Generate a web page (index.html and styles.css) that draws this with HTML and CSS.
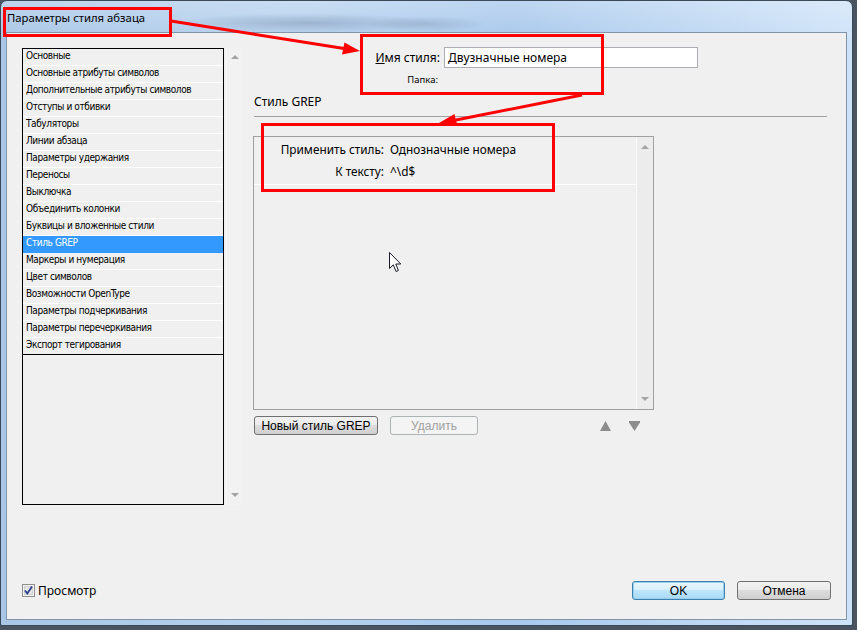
FILE: index.html
```html
<!DOCTYPE html>
<html lang="ru">
<head>
    <meta charset="UTF-8">
    <title>Параметры стиля абзаца</title>
    <link rel="stylesheet" href="styles.css">
</head>
<body>
<div class="screen">
    <div class="window">
        <div class="titlebar"><span class="title">Параметры стиля абзаца</span></div>
        <div class="client">
            <div class="main">
                <!-- left: category list -->
                <div class="side">
                    <ul class="list">
                        <li>Основные</li>
                        <li>Основные атрибуты символов</li>
                        <li>Дополнительные атрибуты символов</li>
                        <li>Отступы и отбивки</li>
                        <li>Табуляторы</li>
                        <li>Линии абзаца</li>
                        <li>Параметры удержания</li>
                        <li>Переносы</li>
                        <li>Выключка</li>
                        <li>Объединить колонки</li>
                        <li>Буквицы и вложенные стили</li>
                        <li class="selected">Стиль GREP</li>
                        <li>Маркеры и нумерация</li>
                        <li>Цвет символов</li>
                        <li>Возможности OpenType</li>
                        <li>Параметры подчеркивания</li>
                        <li>Параметры перечеркивания</li>
                        <li class="last">Экспорт тегирования</li>
                    </ul>
                    <div class="vscroll">
                        <span class="arr up"></span>
                        <span class="arr down"></span>
                    </div>
                </div>

                <!-- right: GREP panel -->
                <div class="panel">
                    <div class="name-grid">
                        <span class="name-label"><u>И</u>мя стиля:</span>
                        <div class="input">Двузначные номера</div>
                        <span class="folder-label">Папка:</span>
                    </div>
                    <h2 class="section-title">Стиль GREP</h2>
                    <div class="rule"></div>
                    <div class="grep-box">
                        <div class="grep-rows">
                            <div class="grep-item">
                                <div class="grep-row"><span class="k">Применить стиль:</span><span class="v">Однозначные номера</span></div>
                                <div class="grep-row"><span class="k">К тексту:</span><span class="v">^\d$</span></div>
                            </div>
                        </div>
                        <div class="vscroll boxed">
                            <span class="arr up"></span>
                            <span class="arr down"></span>
                        </div>
                    </div>
                    <div class="grep-actions">
                        <button class="btn btn-new">Новый стиль GREP</button>
                        <button class="btn btn-del" disabled>Удалить</button>
                        <svg class="move move-up" width="11" height="10" viewBox="0 0 11 10"><polygon points="5.5,0 11,10 0,10" fill="#8c8c8c"/></svg>
                        <svg class="move" width="11" height="10" viewBox="0 0 11 10"><polygon points="0,0 11,0 11,1.5 5.5,10 0,1.5" fill="#8c8c8c"/></svg>
                    </div>
                </div>
            </div>

            <div class="footer">
                <label class="check">
                    <svg width="13" height="13" viewBox="0 0 13 13">
                        <rect x="0.5" y="0.5" width="12" height="12" fill="#f4f4f4" stroke="#8f8f8f"/>
                        <rect x="2.5" y="2.5" width="8" height="8" fill="#e6e6e6" stroke="#d0d0d0"/>
                        <path d="M3 6.5 L5.3 9.5 L10 2.5" fill="none" stroke="#2b3f8c" stroke-width="1.8"/>
                    </svg>
                    <span>Просмотр</span>
                </label>
                <div class="dlg-buttons">
                    <button class="btn btn-dlg btn-default">OK</button>
                    <button class="btn btn-dlg">Отмена</button>
                </div>
            </div>
        </div>
    </div>

    <!-- red annotation marks over the screenshot -->
    <svg class="annotations" width="857" height="630" viewBox="0 0 857 630">
        <g fill="none" stroke="#ff0000" stroke-width="3">
            <rect x="4.5" y="8.5" width="166" height="27"/>
            <rect x="361.5" y="35.5" width="241" height="58"/>
            <rect x="262.5" y="124.5" width="291" height="66"/>
            <line x1="171" y1="21" x2="344" y2="48.5"/>
            <line x1="582" y1="95" x2="456" y2="120"/>
        </g>
        <g fill="#ff0000">
            <polygon points="360,51 342,54.5 344.5,42.5"/>
            <polygon points="439,123 454.5,114 457.5,126"/>
        </g>
    </svg>

    <svg class="cursor" width="13" height="21" viewBox="0 0 13 21">
        <path d="M0.5 0.5 L0.5 16.5 L4.3 12.8 L7 19.5 L9.4 18.5 L6.8 12 L11.8 12 Z" fill="#fff" stroke="#1a1a2a" stroke-width="1"/>
    </svg>
</div>
</body>
</html>
```

FILE: styles.css
```css
body { margin: 0; background: #4a5461; }
.screen { position: relative; width: 857px; height: 630px; overflow: hidden; background: #4a5461; }

/* window frame */
.window { width: 853px; height: 626px; box-sizing: border-box; border: 1px solid #3a4958; border-radius: 7px 7px 2px 2px; padding: 0 5px 5px; display: flex; flex-direction: column;
    background: linear-gradient(to bottom, rgba(255,255,255,0.25), rgba(255,255,255,0) 40px), linear-gradient(to right, #a9c6e6, #b7d2ef 35%, #a8c8ec 60%, #cfe3f8); }
.titlebar { height: 31px; display: flex; align-items: center; padding-left: 1px;
    background: radial-gradient(ellipse 130px 10px at 300px 22px, rgba(70,90,120,0.28), rgba(70,90,120,0)), radial-gradient(ellipse 60px 8px at 420px 23px, rgba(70,90,120,0.2), rgba(70,90,120,0)); }
.title { font: 11.3px "Noto Sans", sans-serif; color: #000; margin-top: 1px; }

.client { flex: 1; display: flex; flex-direction: column; border: 1px solid #8196ad; background: #f0f0f0; }
.main { display: flex; gap: 12px; padding: 15px 19px 0 15px; }

/* category list */
.side { display: flex; width: 220px; height: 457px; flex: none; }
.list { width: 202px; box-sizing: border-box; margin: 0; padding: 0; list-style: none; border: 1px solid #000; background: #f0f0f0; }
.list li { height: 15px; padding: 1px 0 0 3px; line-height: 17px; border-bottom: 1px solid #fff; font: 10px "DejaVu Sans Condensed", "Liberation Sans", sans-serif; letter-spacing: -0.4px; color: #000; white-space: nowrap; }
.list li.selected { background: #3399ff; color: #fff; border-bottom-color: #3399ff; }
.list li.last { border-bottom-color: #000; }

.vscroll { width: 16px; margin-left: 2px; box-sizing: border-box; padding: 7px 0 8px; display: flex; flex-direction: column; justify-content: space-between; align-items: center; background: #f2f2f2; border-left: 1px solid #f7f7f7; }
.vscroll.boxed { width: 17px; margin-left: 0; padding: 8px 0 8px; border-left: 1px solid #fafafa; background: #ececec; }
.arr { width: 0; height: 0; border-left: 4px solid transparent; border-right: 4px solid transparent; }
.arr.up { border-bottom: 4px solid #a4a4a4; }
.arr.down { border-top: 4px solid #a4a4a4; }

/* GREP panel */
.panel { flex: 1; display: flex; flex-direction: column; font: 12px "Noto Sans", sans-serif; color: #000; }
.name-grid { display: grid; grid-template-columns: 65px 254px; column-gap: 4px; row-gap: 6px; padding-left: 121px; margin-top: -1px; }
.name-label { text-align: right; align-self: center; line-height: 16px; }
.input { height: 21px; box-sizing: border-box; border: 1px solid #abadb3; background: #fff; padding-left: 3px; line-height: 19px; }
.folder-label { grid-column: 1; font-size: 9.5px; line-height: 12px; text-align: right; padding-right: 2px; }
.section-title { margin: 8px 0 0; font-size: 12px; font-weight: normal; line-height: 16px; }
.rule { margin-top: 6px; height: 1px; background: #a0a0a0; }

.grep-box { width: 401px; height: 274px; box-sizing: border-box; margin: 19px 0 0 -1px; border: 1px solid #a0a0a0; display: flex; }
.grep-rows { flex: 1; padding-top: 1px; }
.grep-item { border-bottom: 1px solid #fff; padding-bottom: 2px; }
.grep-row { display: flex; align-items: center; height: 22px; font-size: 11.8px; }
.k { width: 136px; box-sizing: border-box; padding-right: 6px; text-align: right; }

.grep-actions { display: flex; align-items: center; gap: 12px; width: 400px; height: 19px; margin-top: 6px; padding-right: 14px; box-sizing: border-box; }
.move-up { margin-left: auto; margin-right: 6px; }

/* buttons */
.btn { height: 19px; box-sizing: border-box; padding: 0; border: 1px solid #707070; border-radius: 3px; font: 12px "Liberation Sans", sans-serif; color: #000;
    background: linear-gradient(to bottom, #f2f2f2, #ebebeb 45%, #dddddd 50%, #cfcfcf); }
.btn-new { width: 124px; }
.btn-del { width: 88px; border-color: #adb2b5; background: #f4f4f4; color: #a0a0a0; }

.footer { margin-top: auto; display: flex; align-items: center; justify-content: space-between; height: 19px; padding: 0 15px 19px; }
.check { display: flex; align-items: center; gap: 3px; font: 12px "Noto Sans", sans-serif; color: #000; }
.check svg { display: block; }
.dlg-buttons { display: flex; gap: 12px; }
.btn-dlg { width: 93px; }
.btn-dlg + .btn-dlg { width: 94px; }
.btn-default { border-color: #3c7fb1; box-shadow: inset 0 0 0 1px #98d1ef;
    background: linear-gradient(to bottom, #eaf6fd, #d9f0fc 45%, #bee6fd 50%, #a7d9f5); }

/* overlays */
.annotations { position: absolute; left: 0; top: 0; pointer-events: none; }
.cursor { position: absolute; left: 389px; top: 252px; pointer-events: none; }
```
